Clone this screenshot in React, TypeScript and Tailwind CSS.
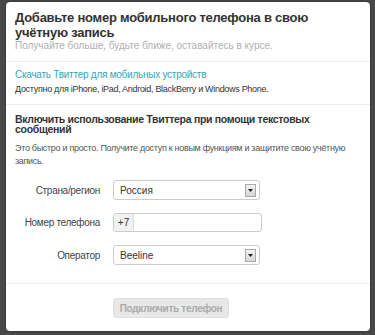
import React from 'react'

function Arrow() {
  return (
    <span className="flex h-[13px] w-[11px] items-center justify-center border border-[#a9a9a9] bg-gradient-to-b from-[#f4f4f4] to-[#d6d6d6]">
      <svg width="5" height="3" viewBox="0 0 5 3">
        <path d="M0 0h5L2.5 3z" fill="#222" />
      </svg>
    </span>
  )
}

function Row({ label, children }: { label: string; children: React.ReactNode }) {
  return (
    <div className="flex items-center">
      <div className="w-[98px] pr-[13px] text-right text-[10px] tracking-[-0.3px] text-[#444]">{label}</div>
      {children}
    </div>
  )
}

export default function App() {
  return (
    <div
      className="h-[335px] w-[375px] bg-[#484848] pl-[6px] pr-[5px] pt-[2px]"
      style={{ fontFamily: '"Liberation Sans", Arial, sans-serif' }}
    >
      <div className="flex h-[329px] flex-col rounded-[4px] bg-white shadow-[0_0_2px_rgba(0,0,0,0.6)]">
        <div className="border-b border-[#ececec] px-[9px] pt-[8px] pb-[9px]">
          <h1 className="text-[13px] font-bold leading-[15px] tracking-[-0.25px] text-[#333]">
            Добавьте номер мобильного телефона в свою учётную запись
          </h1>
          <p className="text-[10px] leading-[12px] text-[#b0b0b0]">
            Получайте больше, будьте ближе, оставайтесь в курсе.
          </p>
        </div>
        <div className="border-b border-[#ececec] px-[9px] pt-[7px] pb-[9px]">
          <div className="text-[10px] leading-[12px] tracking-[-0.25px] text-[#36a5bd]">
            Скачать Твиттер для мобильных устройств
          </div>
          <div className="mt-[3px] text-[9px] leading-[11px] tracking-[-0.3px] text-[#333]">
            Доступно для iPhone, iPad, Android, BlackBerry и Windows Phone.
          </div>
        </div>
        <div className="border-b border-[#ececec] px-[9px] pt-[9px] pb-[18px]">
          <h2 className="text-[10.5px] font-bold leading-[10px] tracking-[-0.3px] text-[#333]">
            Включить использование Твиттера при помощи текстовых сообщений
          </h2>
          <p className="mt-[8px] text-[9px] leading-[13px] tracking-[-0.3px] text-[#555]">
            Это быстро и просто. Получите доступ к новым функциям и защитите свою учётную запись.
          </p>
          <div className="mt-[12px] flex flex-col gap-[13px]">
            <Row label="Страна/регион">
              <div className="flex h-[20px] w-[147px] items-center justify-between rounded-[3px] border border-[#ccc] pl-[6px] pr-[3px] text-[10px] text-[#333]">
                <span>Россия</span>
                <Arrow />
              </div>
            </Row>
            <Row label="Номер телефона">
              <div className="flex h-[19px] w-[149px] items-center overflow-hidden rounded-[3px] border border-[#ccc] text-[10px] text-[#333]">
                <span className="flex h-full w-[20px] items-center justify-center border-r border-[#ddd] bg-[#f1f1f1]">+7</span>
              </div>
            </Row>
            <Row label="Оператор">
              <div className="flex h-[20px] w-[147px] items-center justify-between rounded-[3px] border border-[#ccc] pl-[6px] pr-[3px] text-[10px] text-[#333]">
                <span>Beeline</span>
                <Arrow />
              </div>
            </Row>
          </div>
        </div>
        <div className="flex flex-1 items-start pl-[107px] pt-[14px]">
          <div className="flex h-[20px] w-[116px] items-center justify-center rounded-[3px] border border-[#e0e0e0] bg-[#e8e8e8] text-[10px] font-bold tracking-[-0.3px] text-[#aaa]">
            Подключить телефон
          </div>
        </div>
      </div>
    </div>
  )
}
